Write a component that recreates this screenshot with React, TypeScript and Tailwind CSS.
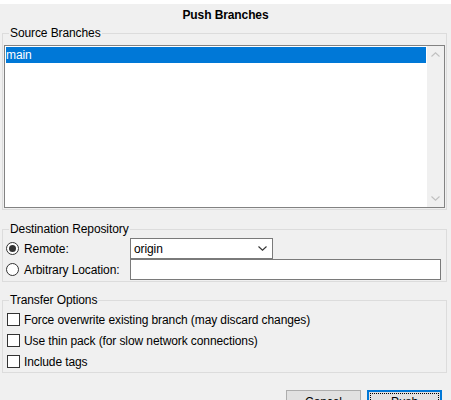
const font = { fontFamily: '"Liberation Sans", Arial, sans-serif' }

const Chevron = ({ up, color }: { up?: boolean; color: string }) => (
  <svg width="9" height="5" viewBox="0 0 9 5" className="block">
    <path
      d={up ? 'M0.5 4.5 L4.5 0.8 L8.5 4.5' : 'M0.5 0.5 L4.5 4.2 L8.5 0.5'}
      fill="none"
      stroke={color}
      strokeWidth="1.1"
    />
  </svg>
)

const Radio = ({ checked }: { checked?: boolean }) => (
  <span className="flex h-[13px] w-[13px] shrink-0 items-center justify-center rounded-full border border-[#333333] bg-white">
    {checked && <span className="h-[7px] w-[7px] rounded-full bg-[#333333]" />}
  </span>
)

const Checkbox = () => (
  <span className="block h-[13px] w-[13px] shrink-0 border border-[#333333] bg-white" />
)

const Legend = ({ children }: { children: React.ReactNode }) => (
  <legend className="ml-[5px] px-[1px] text-[12px] leading-[15px] text-black">{children}</legend>
)

export default function App() {
  const options = [
    'Force overwrite existing branch (may discard changes)',
    'Use thin pack (for slow network connections)',
    'Include tags',
  ]

  return (
    <div
      className="h-[400px] w-[451px] overflow-hidden bg-[#f0f0f0] text-[12px] tracking-[-0.1px] text-black"
      style={font}
    >
      <div className="h-[4px] bg-white" />
      <div className="flex h-[22px] items-center justify-center font-bold">Push Branches</div>

      {/* Source Branches */}
      <fieldset className="ml-[2px] mr-[4px] border border-[#dcdcdc] px-[1px] pb-[1px] pt-[4px]">
        <Legend>Source Branches</Legend>
        <div className="flex h-[163px] border border-[#828282] bg-white">
          <div className="flex-1 p-[1px]">
            <div className="h-[16px] bg-[#0078d7] leading-[16px] text-white">main</div>
          </div>
          <div className="flex w-[17px] flex-col justify-between bg-[#f0f0f0]">
            <div className="flex h-[17px] items-center justify-center">
              <Chevron up color="#c0c0c0" />
            </div>
            <div className="flex h-[17px] items-center justify-center">
              <Chevron color="#c0c0c0" />
            </div>
          </div>
        </div>
      </fieldset>

      {/* Destination Repository */}
      <fieldset className="ml-[2px] mr-[4px] mt-[12px] border border-[#dcdcdc] pb-[1px] pl-[1px] pr-[5px] pt-[1px]">
        <Legend>Destination Repository</Legend>
        <div className="flex h-[21px] items-center">
          <div className="flex w-[126px] items-center gap-[5px] pl-[2px]">
            <Radio checked />
            <span>Remote:</span>
          </div>
          <div className="flex h-[21px] w-[143px] items-center justify-between border border-[#7a7a7a] bg-white pl-[3px] pr-[5px]">
            <span>origin</span>
            <Chevron color="#333333" />
          </div>
        </div>
        <div className="flex h-[21px] items-center">
          <div className="flex w-[126px] items-center gap-[5px] pl-[2px]">
            <Radio />
            <span>Arbitrary Location:</span>
          </div>
          <div className="h-[21px] flex-1 border border-[#7a7a7a] bg-white" />
        </div>
      </fieldset>

      {/* Transfer Options */}
      <fieldset className="ml-[2px] mr-[4px] mt-[11px] border border-[#dcdcdc] pb-0 pl-[1px] pt-[1px]">
        <Legend>Transfer Options</Legend>
        {options.map((o) => (
          <div key={o} className="flex h-[21px] items-center gap-[4px] pl-[3px]">
            <Checkbox />
            <span>{o}</span>
          </div>
        ))}
      </fieldset>

      <div className="mt-[17px] flex justify-end gap-[6px] pr-[9px]">
        <button className="h-[23px] w-[75px] border border-[#adadad] bg-[#e1e1e1]">Cancel</button>
        <button className="h-[23px] w-[75px] border-2 border-[#0078d7] bg-[#e1e1e1] p-[1px]">
          <span className="flex h-full w-full items-center justify-center border border-dotted border-black">
            Push
          </span>
        </button>
      </div>
    </div>
  )
}
